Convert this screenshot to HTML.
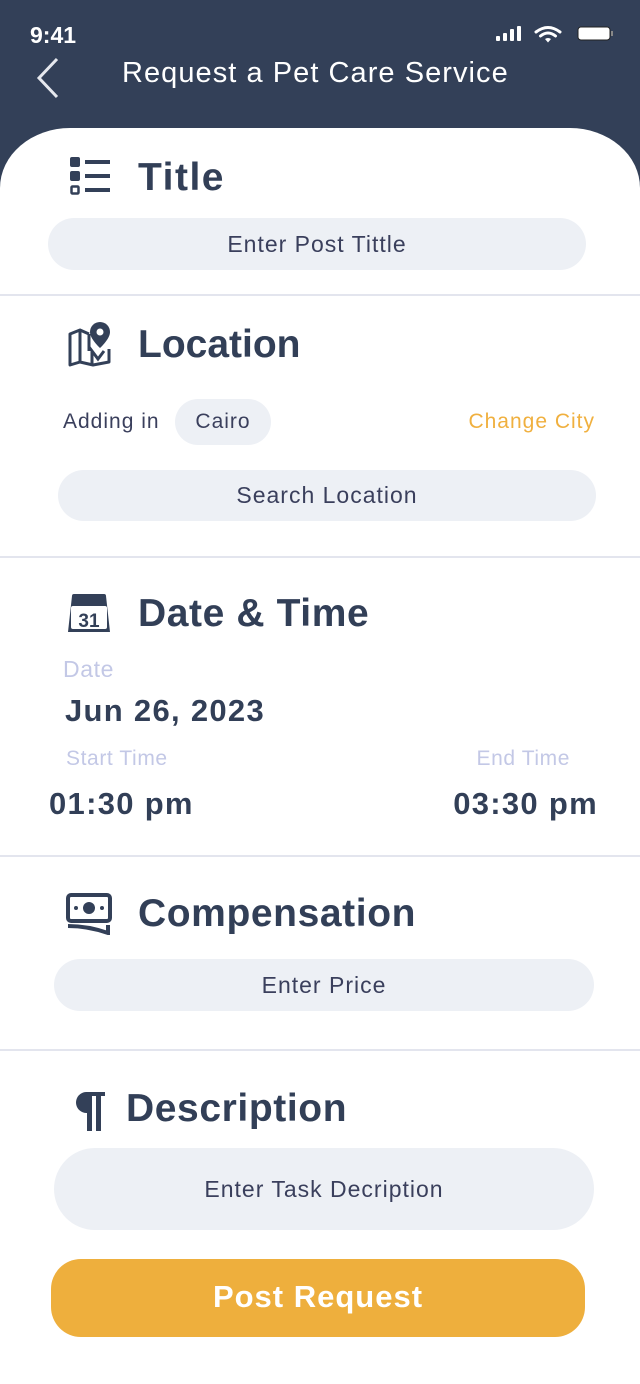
<!DOCTYPE html>
<html><head><meta charset="utf-8"><style>
*{margin:0;padding:0;box-sizing:border-box}
body{width:640px;height:1384px;position:relative;background:#fff;font-family:"Liberation Sans",sans-serif;overflow:hidden;color:#323f57}
.a{position:absolute;white-space:nowrap}
.hdr{position:absolute;left:0;top:0;width:640px;height:260px;background:#334058}
.card{position:absolute;left:0;top:128px;width:640px;height:1256px;background:#fff;border-radius:70px 70px 0 0/60px 60px 0 0}
.h{font-weight:bold;font-size:39px;color:#323f57;line-height:1;letter-spacing:0.6px}
.inp{position:absolute;background:#edf0f5;border-radius:26px;text-align:center;color:#3a3f5c;font-size:23px;letter-spacing:1px}
.div{position:absolute;left:0;width:640px;height:2px;background:#e3e5ee}
.lbl{color:#c3c8e6;font-size:21px;letter-spacing:0.6px}
.big{font-weight:bold;font-size:31px;color:#323f57;letter-spacing:1.3px}
</style></head><body>
<div class="hdr"></div>
<div class="card"></div>
<div class="a" style="left:30px;top:22px;color:#fff;font-weight:bold;font-size:23px">9:41</div>
<svg class="a" style="left:494px;top:24px" width="122" height="20" viewBox="0 0 122 20">
<rect x="2" y="12" width="4" height="5" rx="1" fill="#fff"/><rect x="9" y="9" width="4" height="8" rx="1" fill="#fff"/><rect x="16" y="5" width="4" height="12" rx="1" fill="#fff"/><rect x="23" y="2" width="4" height="15" rx="1" fill="#fff"/>
<path d="M42 8 Q54 -1 66 8" stroke="#fff" stroke-width="3" fill="none" stroke-linecap="round"/><path d="M46.5 12 Q54 6 61.5 12" stroke="#fff" stroke-width="3" fill="none" stroke-linecap="round"/><path d="M51 15 L54 18.5 L57 15 Q54 13 51 15Z" fill="#fff"/>
<rect x="84" y="3" width="32" height="13" rx="3" fill="#fff" stroke="#222" stroke-width="1"/><rect x="117" y="7" width="2" height="5" fill="#888"/>
</svg>
<svg class="a" style="left:34px;top:56px" width="28" height="44" viewBox="0 0 28 44"><path d="M23 3 L5 22 L23 41" stroke="#e6e8ee" stroke-width="3" fill="none"/></svg>
<div class="a" style="left:122px;top:57px;color:#fff;font-size:29px;letter-spacing:1.05px">Request a Pet Care Service</div>

<svg class="a" style="left:70px;top:157px" width="42" height="40" viewBox="0 0 42 40"><rect x="0" y="0" width="10" height="10" rx="2" fill="#334058"/><rect x="0" y="14" width="10" height="10" rx="2" fill="#334058"/><rect x="1.5" y="29.5" width="7" height="7" rx="1" fill="none" stroke="#334058" stroke-width="2.5"/><rect x="15" y="3" width="25" height="4" fill="#334058"/><rect x="15" y="17" width="25" height="4" fill="#334058"/><rect x="15" y="31" width="25" height="4" fill="#334058"/></svg>
<div class="a h" style="left:138px;top:158px;letter-spacing:1.5px">Title</div>
<div class="inp" style="left:48px;top:218px;width:538px;height:52px;line-height:52px">Enter Post Tittle</div>
<div class="div" style="top:294px"></div>

<svg class="a" style="left:67px;top:321px" width="46" height="46" viewBox="0 0 46 46"><path d="M3 13 L13 9 L13 41 L3 44Z M13 9 L22 13 M13 41 L26 44 L42 41 L42 28" stroke="#334058" stroke-width="3" fill="none" stroke-linejoin="round"/><path d="M25 44 L25 30 L31 38 L37 30 M22 13 L22 30" stroke="#334058" stroke-width="3" fill="none"/><path d="M33 1 A10 10 0 0 1 43 11 C43 18 33 27 33 27 C33 27 23 18 23 11 A10 10 0 0 1 33 1Z" fill="#334058"/><circle cx="33" cy="11" r="3.5" fill="#fff"/></svg>
<div class="a h" style="left:138px;top:325px;letter-spacing:0">Location</div>
<div class="a" style="left:63px;top:410px;font-size:21px;color:#3a3f5c;letter-spacing:1px">Adding in</div>
<div class="inp" style="left:175px;top:399px;width:96px;height:46px;line-height:46px;font-size:21px;border-radius:23px">Cairo</div>
<div class="a" style="right:45px;top:410px;font-size:21px;color:#f0b03f;letter-spacing:1px">Change City</div>
<div class="inp" style="left:58px;top:470px;width:538px;height:51px;line-height:51px">Search Location</div>
<div class="div" style="top:556px"></div>

<svg class="a" style="left:66px;top:592px" width="46" height="42" viewBox="0 0 46 42"><path d="M6 4 H40 L44 40 H2Z" fill="#334058"/><rect x="5" y="14" width="36" height="23" rx="2" fill="#fff"/><rect x="6" y="2" width="34" height="6" rx="2" fill="#334058"/><text x="23" y="35" font-family="Liberation Sans" font-weight="bold" font-size="19" fill="#334058" text-anchor="middle">31</text></svg>
<div class="a h" style="left:138px;top:594px">Date &amp; Time</div>
<div class="a lbl" style="left:63px;top:656px;font-size:23px">Date</div>
<div class="a big" style="left:65px;top:693px">Jun 26, 2023</div>
<div class="a lbl" style="left:66px;top:747px">Start Time</div>
<div class="a lbl" style="right:70px;top:747px">End Time</div>
<div class="a big" style="left:49px;top:786px">01:30 pm</div>
<div class="a big" style="right:42px;top:786px">03:30 pm</div>
<div class="div" style="top:855px"></div>

<svg class="a" style="left:66px;top:893px" width="46" height="42" viewBox="0 0 46 42"><rect x="2" y="2" width="42" height="26" rx="3" fill="none" stroke="#334058" stroke-width="4"/><circle cx="23" cy="15" r="6" fill="#334058"/><circle cx="10" cy="15" r="2" fill="#334058"/><circle cx="36" cy="15" r="2" fill="#334058"/><path d="M2 33 Q22 33 42 40 L42 32" stroke="#334058" stroke-width="4" fill="none"/></svg>
<div class="a h" style="left:138px;top:894px">Compensation</div>
<div class="inp" style="left:54px;top:959px;width:540px;height:52px;line-height:52px">Enter Price</div>
<div class="div" style="top:1049px"></div>

<svg class="a" style="left:72px;top:1091px" width="36" height="40" viewBox="0 0 36 40"><path d="M14 1 H33 V5 H29 V40 H24 V5 H20 V40 H15 V22 A10.5 10.5 0 0 1 14 1Z" fill="#334058"/></svg>
<div class="a h" style="left:126px;top:1089px">Description</div>
<div class="inp" style="left:54px;top:1148px;width:540px;height:82px;line-height:82px;border-radius:41px">Enter Task Decription</div>
<div class="a" style="left:51px;top:1259px;width:534px;height:78px;border-radius:30px;background:#eeaf3d;color:#fff;font-weight:bold;font-size:31px;letter-spacing:1px;text-align:center;line-height:76px">Post Request</div>
</body></html>
